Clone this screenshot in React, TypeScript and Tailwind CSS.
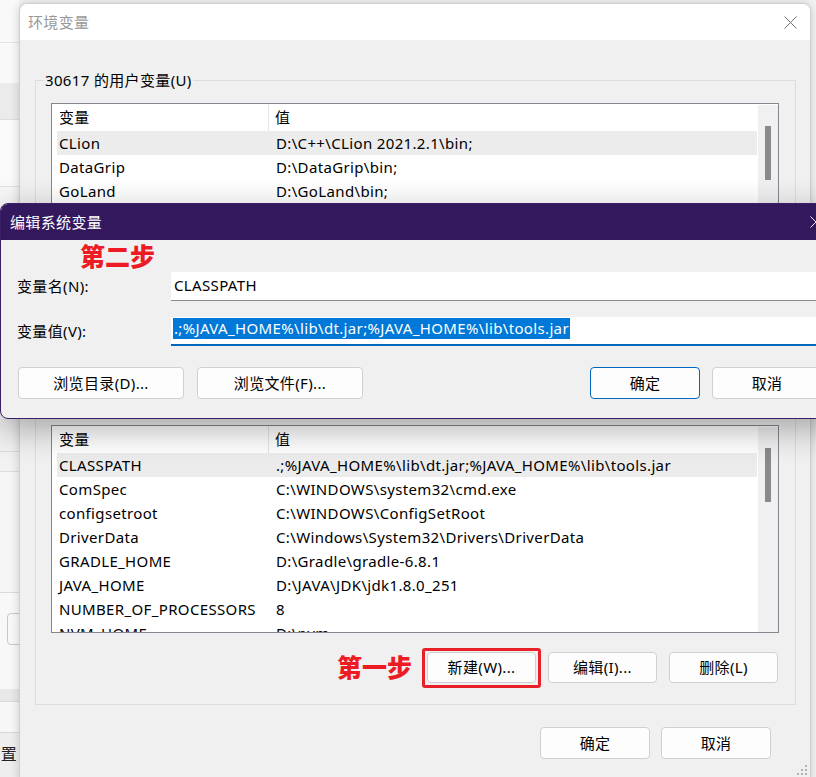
import React from "react";

const userRows: [string, string][] = [
  ["CLion", "D:\\C++\\CLion 2021.2.1\\bin;"],
  ["DataGrip", "D:\\DataGrip\\bin;"],
  ["GoLand", "D:\\GoLand\\bin;"],
  ["IntelliJ IDEA", "D:\\IntelliJ IDEA\\bin;"],
  ["OneDrive", "C:\\Users\\30617\\OneDrive"],
  ["Path", "C:\\Users\\30617\\AppData\\Local\\Microsoft\\WindowsApps;"],
  ["TEMP", "C:\\Users\\30617\\AppData\\Local\\Temp"],
  ["TMP", "C:\\Users\\30617\\AppData\\Local\\Temp"],
];

const sysRows: [string, string][] = [
  ["CLASSPATH", ".;%JAVA_HOME%\\lib\\dt.jar;%JAVA_HOME%\\lib\\tools.jar"],
  ["ComSpec", "C:\\WINDOWS\\system32\\cmd.exe"],
  ["configsetroot", "C:\\WINDOWS\\ConfigSetRoot"],
  ["DriverData", "C:\\Windows\\System32\\Drivers\\DriverData"],
  ["GRADLE_HOME", "D:\\Gradle\\gradle-6.8.1"],
  ["JAVA_HOME", "D:\\JAVA\\JDK\\jdk1.8.0_251"],
  ["NUMBER_OF_PROCESSORS", "8"],
  ["NVM_HOME", "D:\\nvm"],
];

function VarTable({ rows }: { rows: [string, string][] }) {
  return (
    <div className="flex h-[208px] w-[728px] overflow-hidden border border-[#828790] bg-white">
      <div className="flex min-w-0 flex-1 flex-col overflow-hidden">
        <div className="flex h-[27px] shrink-0 items-center pl-[5px]">
          <div className="flex h-full w-[212px] items-center border-r border-[#e5e5e5] pl-[2px]">变量</div>
          <div className="pl-[6px]">值</div>
        </div>
        <div className="pl-[5px]">
          {rows.map(([k, v], i) => (
            <div
              key={k}
              className={
                "flex h-[24px] items-center whitespace-nowrap " + (i === 0 ? "bg-[#ececec]" : "")
              }
            >
              <div className="w-[212px] pl-[2px]">{k}</div>
              <div className="pl-[7px]">{v}</div>
            </div>
          ))}
        </div>
      </div>
      <div className="flex w-[21px] shrink-0 justify-center border-l border-t border-white bg-[#f0f0f0]">
        <div className="mt-[21px] h-[54px] w-[6px] bg-[#8a8a8a]" />
      </div>
    </div>
  );
}

function Btn({
  children,
  className = "",
}: {
  children: React.ReactNode;
  className?: string;
}) {
  return (
    <div
      className={
        "flex shrink-0 items-center justify-center rounded-[4px] border bg-[#fdfdfd] " + className
      }
    >
      {children}
    </div>
  );
}

function Group({
  label,
  rows,
  annotate,
}: {
  label: string;
  rows: [string, string][];
  annotate?: boolean;
}) {
  const newBtn = <Btn className="h-[31px] w-[109px] border-[#d0d0d0]">新建(W)...</Btn>;
  return (
    <div className="relative h-[303px] w-[761px] shrink-0 border border-[#dcdcdc] pl-[15px] pt-[22px]">
      <div className="absolute left-[8px] top-[-11px] bg-[#f0f0f0] px-[1px] leading-[20px]">{label}</div>
      <VarTable rows={rows} />
      <div className="mt-[19px] flex h-[31px] items-center justify-end gap-[12px] pr-[17px]">
        {annotate && (
          <div className="mr-[3px] text-[25px] font-black leading-none tracking-normal text-[#ed1c24]">第一步</div>
        )}
        {annotate ? (
          <div className="-mx-[5px] -my-[4px] rounded-[3px] border-[3px] border-[#e8202a] px-[2px] pb-[2px] pt-[1px]">
            {newBtn}
          </div>
        ) : (
          newBtn
        )}
        <Btn className="h-[31px] w-[109px] border-[#d0d0d0]">编辑(I)...</Btn>
        <Btn className="h-[31px] w-[109px] border-[#d0d0d0]">删除(L)</Btn>
      </div>
    </div>
  );
}

function XIcon({ color, size = 13 }: { color: string; size?: number }) {
  return (
    <svg width={size} height={size} viewBox="0 0 13 13">
      <path d="M0.5 0.5 L12.5 12.5 M12.5 0.5 L0.5 12.5" stroke={color} strokeWidth="1" fill="none" />
    </svg>
  );
}

export default function App() {
  return (
    <div className="relative h-[777px] w-[816px] overflow-hidden bg-[#f3f3f3] font-['Noto_Sans','Noto_Sans_CJK_SC',sans-serif] text-[15px] tracking-[0.35px] text-black">
      {/* background settings window (left strip) */}
      <div className="absolute left-0 top-0 flex h-full w-[19px] flex-col">
        <div className="h-[43px] shrink-0 border-b border-[#e3e3e3] bg-[#f9f9f9]" />
        <div className="h-[40px] shrink-0 bg-[#f9f9f9]" />
        <div className="h-[37px] shrink-0 border-b border-[#dedede] bg-[#ebebeb]" />
        <div className="h-[67px] shrink-0 border-b border-[#e0e0e0] bg-[#fafafa]" />
        <div className="h-[232px] shrink-0 bg-[#f7f7f7]" />
        <div className="h-[33px] shrink-0 border-b border-[#dcdcdc] bg-[#f2f2f2]" />
        <div className="h-[20px] shrink-0 border-b border-[#dcdcdc] bg-[#f2f2f2]" />
        <div className="h-[121px] shrink-0 border-b border-[#dcdcdc] bg-[#f5f5f5]" />
        <div className="relative h-[96px] shrink-0 bg-[#f8f8f8]">
          <div className="absolute left-[7px] top-[20px] h-[32px] w-[20px] rounded-[4px] border border-[#c8c8c8]" />
        </div>
        <div className="h-[13px] shrink-0 border-b border-[#d8d8d8] bg-[#e8e8e8]" />
        <div className="h-[31px] shrink-0 border-b border-[#d8d8d8] bg-[#f7f7f7]" />
        <div className="relative flex-1 overflow-hidden bg-[#eeeeee]">
          <div className="absolute right-[2px] top-[11px] whitespace-nowrap text-[16px] leading-[20px] text-[#222]">设置</div>
        </div>
      </div>

      {/* main window: 环境变量 */}
      <div className="absolute left-[19px] top-[3px] flex h-[782px] w-[792px] flex-col overflow-hidden rounded-[8px] border border-[#cfcfcf] bg-[#f0f0f0] shadow-[0_0_10px_rgba(0,0,0,0.18)]">
        <div className="flex h-[36px] shrink-0 items-center justify-between bg-white pl-[8px] pr-[13px]">
          <div className="text-[#999999]">环境变量</div>
          <XIcon color="#707070" />
        </div>
        <div className="flex flex-col px-[15px]">
          <div className="mt-[40px]">
            <Group label="30617 的用户变量(U)" rows={userRows} />
          </div>
          <div className="mt-[19px]">
            <Group label="系统变量(S)" rows={sysRows} annotate />
          </div>
          <div className="mt-[22px] flex w-[761px] justify-end gap-[11px] pr-[25px]">
            <Btn className="h-[32px] w-[110px] border-[#d0d0d0]">确定</Btn>
            <Btn className="h-[32px] w-[110px] border-[#d0d0d0]">取消</Btn>
          </div>
        </div>
        <svg className="absolute bottom-[6px] right-[2px]" width="13" height="13" viewBox="0 0 13 13">
          <g fill="#b0b0b0">
            <rect x="10" y="0" width="2" height="2" />
            <rect x="6" y="4" width="2" height="2" />
            <rect x="10" y="4" width="2" height="2" />
            <rect x="2" y="8" width="2" height="2" />
            <rect x="6" y="8" width="2" height="2" />
            <rect x="10" y="8" width="2" height="2" />
          </g>
        </svg>
      </div>

      {/* dialog: 编辑系统变量 */}
      <div className="absolute left-0 top-[203px] flex h-[216px] w-[840px] flex-col overflow-hidden rounded-[8px] border border-[#3a1f68] bg-[#f0f0f0] shadow-[0_10px_34px_rgba(0,0,0,0.32)]">
        <div className="flex h-[36px] shrink-0 items-center justify-between bg-[#33185e] pl-[9px] pr-[17px] text-white">
          <div>编辑系统变量</div>
          <XIcon color="#ffffff" size={12} />
        </div>
        <div className="flex h-[32px] shrink-0 items-center pl-[79px] text-[25px] font-black leading-none tracking-normal text-[#ed1c24]">
          第二步
        </div>
        <div className="flex h-[29px] shrink-0 items-center">
          <div className="w-[170px] shrink-0 pl-[16px]">变量名(N):</div>
          <div className="flex h-full flex-1 items-center border-b border-[#8a8a8a] bg-white pb-[2px] pl-[3px]">
            CLASSPATH
          </div>
        </div>
        <div className="mt-[16px] flex h-[29px] shrink-0 items-center">
          <div className="w-[170px] shrink-0 pl-[16px]">变量值(V):</div>
          <div className="flex h-full flex-1 items-start border-b-2 border-[#0067c0] bg-white pl-[2px] pt-[1px]">
            <span className="inline-block h-[21px] whitespace-nowrap bg-[#0078d7] px-[1px] leading-[21px] text-white">
              .;%JAVA_HOME%\lib\dt.jar;%JAVA_HOME%\lib\tools.jar
            </span>
          </div>
        </div>
        <div className="mt-[21px] flex h-[32px] shrink-0 pl-[17px]">
          <Btn className="h-[32px] w-[166px] border-[#d0d0d0]">浏览目录(D)...</Btn>
          <Btn className="ml-[13px] h-[32px] w-[166px] border-[#d0d0d0]">浏览文件(F)...</Btn>
          <Btn className="ml-[227px] h-[32px] w-[110px] border-[#0067c0]">确定</Btn>
          <Btn className="ml-[12px] h-[32px] w-[110px] border-[#d0d0d0]">取消</Btn>
        </div>
      </div>
    </div>
  );
}
